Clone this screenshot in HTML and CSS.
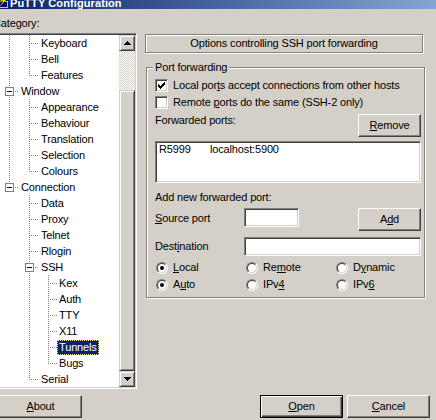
FILE: index.html
```html
<!DOCTYPE html>
<html lang="en">
<head>
<meta charset="utf-8">
<title>PuTTY Configuration</title>
<link rel="stylesheet" href="styles.css">
</head>
<body>
<div class="titlebar">
  <svg class="appicon" width="16" height="16" viewBox="0 0 16 16" shape-rendering="crispEdges">
    <rect x="1" y="1" width="9" height="7" fill="#c0c0c0"/>
    <rect x="2" y="2" width="7" height="5" fill="#000080"/>
    <rect x="6" y="8" width="9" height="7" fill="#c0c0c0"/>
    <rect x="7" y="9" width="7" height="5" fill="#000080"/>
    <path d="M12 0L7 8L10 8L5 16L14 6L11 6L14 0Z" fill="#ffff00" stroke="#000" stroke-width="0.6" shape-rendering="auto"/>
  </svg>
  <span class="title">PuTTY Configuration</span>
</div>
<div class="dialog">
  <div class="main">
    <div class="leftcol">
      <div class="cat-label">Category:</div>
      <div class="tree sunken">
        <div class="tree-rows">
          <div class="row"><span class="g l0 pipe"></span><span class="g l1 tee"></span><span class="label">Keyboard</span></div>
          <div class="row"><span class="g l0 pipe"></span><span class="g l1 tee"></span><span class="label">Bell</span></div>
          <div class="row"><span class="g l0 pipe"></span><span class="g l1 ell"></span><span class="label">Features</span></div>
          <div class="row"><span class="g l0 tee"><span class="exp"></span></span><span class="label">Window</span></div>
          <div class="row"><span class="g l0 pipe"></span><span class="g l1 tee"></span><span class="label">Appearance</span></div>
          <div class="row"><span class="g l0 pipe"></span><span class="g l1 tee"></span><span class="label">Behaviour</span></div>
          <div class="row"><span class="g l0 pipe"></span><span class="g l1 tee"></span><span class="label">Translation</span></div>
          <div class="row"><span class="g l0 pipe"></span><span class="g l1 tee"></span><span class="label">Selection</span></div>
          <div class="row"><span class="g l0 pipe"></span><span class="g l1 ell"></span><span class="label">Colours</span></div>
          <div class="row"><span class="g l0 ell"><span class="exp"></span></span><span class="label">Connection</span></div>
          <div class="row"><span class="g l0"></span><span class="g l1 tee"></span><span class="label">Data</span></div>
          <div class="row"><span class="g l0"></span><span class="g l1 tee"></span><span class="label">Proxy</span></div>
          <div class="row"><span class="g l0"></span><span class="g l1 tee"></span><span class="label">Telnet</span></div>
          <div class="row"><span class="g l0"></span><span class="g l1 tee"></span><span class="label">Rlogin</span></div>
          <div class="row"><span class="g l0"></span><span class="g l1 tee"><span class="exp"></span></span><span class="label">SSH</span></div>
          <div class="row"><span class="g l0"></span><span class="g l1 pipe"></span><span class="g l2 tee"></span><span class="label">Kex</span></div>
          <div class="row"><span class="g l0"></span><span class="g l1 pipe"></span><span class="g l2 tee"></span><span class="label">Auth</span></div>
          <div class="row"><span class="g l0"></span><span class="g l1 pipe"></span><span class="g l2 tee"></span><span class="label">TTY</span></div>
          <div class="row"><span class="g l0"></span><span class="g l1 pipe"></span><span class="g l2 tee"></span><span class="label">X11</span></div>
          <div class="row"><span class="g l0"></span><span class="g l1 pipe"></span><span class="g l2 tee"></span><span class="label sel">Tunnels</span></div>
          <div class="row"><span class="g l0"></span><span class="g l1 pipe"></span><span class="g l2 ell"></span><span class="label">Bugs</span></div>
          <div class="row"><span class="g l0"></span><span class="g l1 ell"></span><span class="label">Serial</span></div>
        </div>
        <div class="vscroll">
          <div class="sb-btn raised2">
            <svg class="arrow" width="7" height="4" viewBox="0 0 7 4" shape-rendering="crispEdges"><path d="M3 0h1v1h-1zM2 1h3v1h-3zM1 2h5v1h-5zM0 3h7v1h-7z" fill="#000"/></svg>
          </div>
          <div class="sb-track"></div>
          <div class="sb-thumb raised2"></div>
          <div class="sb-btn raised2">
            <svg class="arrow" width="7" height="4" viewBox="0 0 7 4" shape-rendering="crispEdges"><path d="M0 0h7v1h-7zM1 1h5v1h-5zM2 2h3v1h-3zM3 3h1v1h-1z" fill="#000"/></svg>
          </div>
        </div>
      </div>
    </div>
    <div class="rightcol">
      <div class="heading">Options controlling SSH port forwarding</div>
      <div class="group">
        <div class="group-title">Port forwarding</div>
        <div class="check-row first-check">
          <span class="checkbox sunken">
            <svg width="7" height="7" viewBox="0 0 7 7" shape-rendering="crispEdges"><path d="M6 0h1v1h-1zM5 1h2v1h-2zM0 2h1v1h-1zM4 2h3v1h-3zM0 3h2v1h-2zM3 3h3v1h-3zM0 4h5v1h-5zM1 5h3v1h-3zM2 6h1v1h-1z" fill="#000"/></svg>
          </span>
          <span class="cb-text">Local por<u>t</u>s accept connections from other hosts</span>
        </div>
        <div class="check-row second-check">
          <span class="checkbox sunken"></span>
          <span class="cb-text">Remote <u>p</u>orts do the same (SSH-2 only)</span>
        </div>
        <div class="fwd-row">
          <span class="txt">Forwarded ports:</span>
          <div class="btn"><span><u>R</u>emove</span></div>
        </div>
        <div class="listbox sunken">
          <div class="item"><span class="c1">R5999</span>localhost:5900</div>
        </div>
        <div class="addnew">Add new forwarded port:</div>
        <div class="src-row">
          <span class="field-label"><u>S</u>ource port</span>
          <span class="input sunken short"></span>
          <div class="btn"><span>A<u>d</u>d</span></div>
        </div>
        <div class="dst-row">
          <span class="field-label">Dest<u>i</u>nation</span>
          <span class="input sunken long"></span>
        </div>
        <div class="radios">
          <div class="radio-cell"><span class="radio on"><i></i></span><span class="radio-text"><u>L</u>ocal</span></div>
          <div class="radio-cell"><span class="radio"><i></i></span><span class="radio-text">Re<u>m</u>ote</span></div>
          <div class="radio-cell"><span class="radio"><i></i></span><span class="radio-text">D<u>y</u>namic</span></div>
          <div class="radio-cell"><span class="radio on"><i></i></span><span class="radio-text">A<u>u</u>to</span></div>
          <div class="radio-cell"><span class="radio"><i></i></span><span class="radio-text">IPv<u>4</u></span></div>
          <div class="radio-cell"><span class="radio"><i></i></span><span class="radio-text">IPv<u>6</u></span></div>
        </div>
      </div>
    </div>
  </div>
  <div class="buttons">
    <div class="btn wide about"><span><u>A</u>bout</span></div>
    <div class="btn wide default open"><span><u>O</u>pen</span></div>
    <div class="btn wide"><span><u>C</u>ancel</span></div>
  </div>
</div>
</body>
</html>
```

FILE: styles.css
```css
* { box-sizing: border-box; }
html, body { margin: 0; padding: 0; }
body {
  width: 436px;
  height: 420px;
  overflow: hidden;
  background: #d4d0c8;
  font-family: "Liberation Sans", Arial, sans-serif;
  font-size: 11px;
  letter-spacing: -0.15px;
  color: #000;
}
u { text-decoration: underline; text-underline-offset: 1px; }

/* title bar (top part cut off) */
.titlebar {
  height: 9px;
  overflow: hidden;
  display: flex;
  align-items: flex-start;
  background: linear-gradient(90deg, #0a246a 0, #a6caf0 560px);
}
.appicon { flex: none; margin: -7px 0 0 -7px; }
.title {
  color: #fff;
  font-weight: bold;
  font-size: 11px;
  line-height: 11px;
  letter-spacing: 0.1px;
  margin: -2px 0 0 1px;
  white-space: nowrap;
}

.dialog { width: 432px; margin-left: -2px; }
.main { display: flex; gap: 8px; }
.leftcol { width: 139px; flex: none; }
.cat-label { margin: 8px 0 0 -5px; line-height: 13px; }

/* bevels */
.sunken {
  border: 1px solid;
  border-color: #808080 #fff #fff #808080;
  box-shadow: inset 1px 1px #404040, inset -1px -1px #d4d0c8;
  background: #fff;
  padding: 1px;
}
.raised2 {
  border: 1px solid;
  border-color: #d4d0c8 #404040 #404040 #d4d0c8;
  box-shadow: inset 1px 1px #fff, inset -1px -1px #808080;
  background: #d4d0c8;
}

/* tree view */
.tree { margin-top: 3px; height: 356px; display: flex; overflow: hidden; }
.tree-rows { flex: 1; min-width: 0; overflow: hidden; }
.row { display: flex; align-items: flex-start; height: 16px; white-space: nowrap; }
.g { flex: none; width: var(--w); height: 16px; background-repeat: no-repeat; }
.l0 { --w: 19px; --x: 9px; }
.l1 { --w: 20px; --x: 10px; }
.l2 { --w: 18px; --x: 9px; }
.pipe {
  background-image: repeating-linear-gradient(to bottom, #808080 0 1px, transparent 1px 2px);
  background-position: var(--x) 0;
  background-size: 1px 16px;
}
.tee {
  background-image:
    repeating-linear-gradient(to bottom, #808080 0 1px, transparent 1px 2px),
    repeating-linear-gradient(to right, #808080 0 1px, transparent 1px 2px);
  background-position: var(--x) 0, calc(var(--x) + 2px) 8px;
  background-size: 1px 16px, calc(var(--w) - var(--x) - 2px) 1px;
}
.ell {
  background-image:
    repeating-linear-gradient(to bottom, #808080 0 1px, transparent 1px 2px),
    repeating-linear-gradient(to right, #808080 0 1px, transparent 1px 2px);
  background-position: var(--x) 0, calc(var(--x) + 2px) 8px;
  background-size: 1px 9px, calc(var(--w) - var(--x) - 2px) 1px;
}
.exp {
  display: block;
  width: 9px;
  height: 9px;
  margin: 4px 0 0 calc(var(--x) - 4px);
  border: 1px solid #808080;
  background: linear-gradient(#000, #000) 1px 3px / 5px 1px no-repeat, #fff;
}
.label {
  margin-top: 1px;
  height: 15px;
  line-height: 15px;
  padding: 0 2px;
}
.label.sel {
  background: #0a246a;
  color: #fff;
  outline: 1px dotted #e8dfa0;
  outline-offset: -1px;
}

/* scrollbar */
.vscroll { width: 16px; flex: none; display: flex; flex-direction: column; }
.sb-btn { height: 16px; flex: none; }
.sb-btn .arrow { display: block; margin: 5px 0 0 4px; }
.sb-track {
  height: 39px;
  flex: none;
  background: repeating-conic-gradient(#fff 0 25%, #d4d0c8 0 50%) 0 0 / 2px 2px;
}
.sb-thumb { flex: 1; }

/* right side */
.rightcol { flex: 1; min-width: 0; }
.heading {
  width: 278px;
  height: 19px;
  margin-top: 25px;
  border: 1px solid #808080;
  box-shadow: inset 1px 1px #fff, 1px 1px #fff;
  text-align: center;
  line-height: 17px;
  white-space: nowrap;
}
.group {
  width: 279px;
  margin: 14px 0 0 1px;
  border: 1px solid #808080;
  box-shadow: inset 1px 1px #fff, 1px 1px #fff;
  padding: 0 3px 6px 8px;
}
.group-title {
  width: max-content;
  margin: -7px 0 0 -2px;
  padding: 0 2px;
  line-height: 13px;
  background: #d4d0c8;
}
.check-row { display: flex; align-items: center; height: 13px; line-height: 13px; }
.first-check { margin-top: 5px; }
.second-check { margin-top: 4px; }
.checkbox {
  flex: none;
  width: 13px;
  height: 13px;
  display: flex;
  align-items: center;
  justify-content: center;
}
.checkbox svg { display: block; }
.cb-text { margin-left: 5px; white-space: nowrap; }

.fwd-row {
  display: flex;
  justify-content: space-between;
  align-items: flex-start;
  margin-top: 5px;
}
.txt { line-height: 13px; }

.btn {
  flex: none;
  width: 63px;
  height: 23px;
  border: 1px solid;
  border-color: #fff #404040 #404040 #fff;
  box-shadow: inset -1px -1px #808080, inset 1px 1px #d4d0c8;
  background: #d4d0c8;
  display: flex;
  align-items: center;
  justify-content: center;
  line-height: 13px;
  white-space: nowrap;
}
.btn.default {
  border-color: #000;
  box-shadow: inset 1px 1px #fff, inset -1px -1px #404040, inset -2px -2px #808080;
}
.btn.wide { width: 83px; }

.listbox { margin-top: 4px; height: 42px; }
.item { padding-left: 2px; line-height: 13px; white-space: nowrap; }
.item .c1 { display: inline-block; width: 51px; }

.addnew { margin-top: 8px; line-height: 13px; }
.src-row { display: flex; align-items: flex-start; margin-top: 4px; }
.dst-row { display: flex; align-items: flex-start; margin-top: 6px; }
.field-label { flex: none; width: 89px; line-height: 13px; margin-top: 4px; white-space: nowrap; }
.dst-row .field-label { margin-top: 3px; }
.input { display: block; height: 19px; }
.input.short { width: 55px; }
.input.long { flex: 1; }
.src-row .btn { margin-left: auto; }

.radios {
  display: grid;
  grid-template-columns: 90px 90px 1fr;
  row-gap: 4px;
  margin-top: 5px;
}
.radio-cell { display: flex; align-items: center; height: 13px; line-height: 13px; white-space: nowrap; }
.radio {
  flex: none;
  margin-left: 1px;
  width: 12px;
  height: 12px;
  border-radius: 50%;
  border: 1px solid;
  border-color: #808080 #fff #fff #808080;
}
.radio i {
  display: flex;
  align-items: center;
  justify-content: center;
  width: 10px;
  height: 10px;
  border-radius: 50%;
  border: 1px solid;
  border-color: #404040 #d4d0c8 #d4d0c8 #404040;
  background: #fff;
}
.radio.on i::after {
  content: "";
  width: 4px;
  height: 4px;
  border-radius: 50%;
  background: #000;
}
.radio-text { margin-left: 5px; }

/* bottom buttons */
.buttons { display: flex; margin-top: 6px; }
.about { margin-left: 1px; }
.open { margin-left: auto; margin-right: 4px; }
```
